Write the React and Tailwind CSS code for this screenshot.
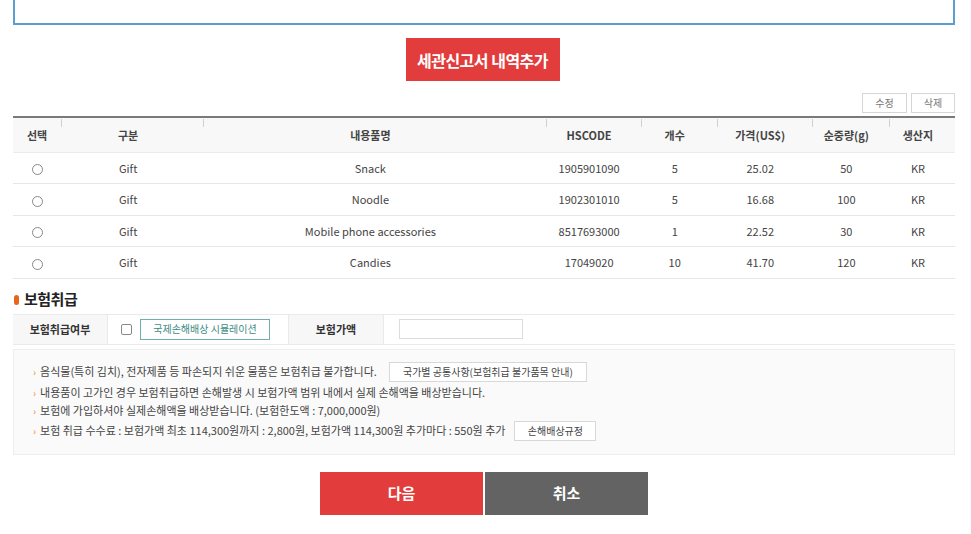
import React from "react";

const cols = [
  { label: "선택", w: 48 },
  { label: "구분", w: 142 },
  { label: "내용품명", w: 342 },
  { label: "HSCODE", w: 95 },
  { label: "개수", w: 76 },
  { label: "가격(US$)", w: 95 },
  { label: "순중량(g)", w: 77 },
  { label: "생산지", w: 66 },
];

const rows = [
  ["Gift", "Snack", "1905901090", "5", "25.02", "50", "KR"],
  ["Gift", "Noodle", "1902301010", "5", "16.68", "100", "KR"],
  ["Gift", "Mobile phone accessories", "8517693000", "1", "22.52", "30", "KR"],
  ["Gift", "Candies", "17049020", "10", "41.70", "120", "KR"],
];

function Arrow() {
  return <span className="text-[#f08a3c] mr-[4px] text-[10px]">›</span>;
}

export default function App() {
  return (
    <div
      className="w-[971px] h-[534px] bg-white overflow-hidden text-[#333]"
      style={{ fontFamily: '"Noto Sans CJK KR", "Noto Sans", sans-serif' }}
    >
      <div className="ml-[13px] w-[942px]">
        {/* top box */}
        <div className="h-[25px] border-x-2 border-b-2 border-[#5b9fcf]" />

        {/* add button */}
        <div className="flex justify-center mt-[13px]">
          <button className="w-[154px] h-[43px] bg-[#e23c3c] text-white text-[16px] font-bold tracking-[-0.5px] ml-[-3px]">
            세관신고서 내역추가
          </button>
        </div>

        {/* edit/delete */}
        <div className="flex justify-end gap-[4px] mt-[12px]">
          <button className="w-[45px] h-[20px] border border-[#d6d6d6] text-[10px] text-[#777] leading-none">수정</button>
          <button className="w-[44px] h-[20px] border border-[#d6d6d6] text-[10px] text-[#777] leading-none">삭제</button>
        </div>

        {/* table */}
        <table className="mt-[3px] w-[942px] border-t-2 border-[#7a7a7a] border-collapse table-fixed">
          <colgroup>
            {cols.map((c, i) => (
              <col key={i} style={{ width: c.w }} />
            ))}
          </colgroup>
          <thead>
            <tr className="h-[35px] bg-[#f8f8f8] border-b border-[#ececec]">
              {cols.map((c, i) => (
                <th key={i} className="relative text-[11px] font-semibold text-[#444] p-0 text-center">
                  {i > 0 && <span className="absolute left-0 top-[1px] w-px h-[8px] bg-[#d0d0d0]" />}
                  <span className={i === 0 ? "" : "ml-[-8px]"}>{c.label}</span>
                </th>
              ))}
            </tr>
          </thead>
          <tbody>
            {rows.map((r, ri) => (
              <tr key={ri} className="h-[31.5px] border-b border-[#e6e6e6] text-[11px] text-[#444]">
                <td className="text-center p-0">
                  <span className="inline-block w-[11px] h-[11px] rounded-full border border-[#888] align-middle" />
                </td>
                {r.map((v, i) => (
                  <td key={i} className="text-center p-0">
                    <span className="ml-[-8px]">{v}</span>
                  </td>
                ))}
              </tr>
            ))}
          </tbody>
        </table>

        {/* insurance */}
        <div className="mt-[11px] flex items-center h-[20px]">
          <span className="w-[5px] h-[10px] rounded-full bg-[#e8651c] mr-[5px] ml-[1px]" />
          <span className="text-[15px] font-bold text-[#222] tracking-[-0.5px]">보험취급</span>
        </div>

        <div className="mt-[4px] flex h-[31px] border-t border-[#d8d8d8] border-b border-[#eaeaea] text-[11px]">
          <div className="w-[95px] bg-[#f7f7f7] flex items-center justify-center font-bold text-[#333] border-r border-[#eaeaea]">
            보험취급여부
          </div>
          <div className="w-[180px] flex items-center pl-[13px]">
            <span className="w-[11px] h-[11px] border border-[#888] rounded-[2px] mr-[8px]" />
            <button className="w-[130px] h-[21px] border border-[#6fb1aa] text-[10px] text-[#3c8c84] leading-none">
              국제손해배상 시뮬레이션
            </button>
          </div>
          <div className="w-[96px] bg-[#f7f7f7] flex items-center justify-center font-bold text-[#333] border-x border-[#eaeaea]">
            보험가액
          </div>
          <div className="flex-1 flex items-center pl-[15px]">
            <div className="w-[124px] h-[20px] border border-[#dcdcdc] bg-white" />
          </div>
        </div>

        {/* notice */}
        <div className="mt-[4px] bg-[#fafafa] border border-[#eeeeee] pl-[19px] pt-[11px] pb-[12px] text-[11px] text-[#444]">
          <div className="h-[22px] flex items-center">
            <Arrow />
            <span>음식물(특히 김치), 전자제품 등 파손되지 쉬운 물품은 보험취급 불가합니다.</span>
            <button className="ml-[12px] w-[198px] h-[20px] border border-[#d8d8d8] bg-white text-[10px] text-[#444] leading-none">
              국가별 공통사항(보험취급 불가품목 안내)
            </button>
          </div>
          <div className="h-[19px] flex items-center">
            <Arrow />
            <span>내용품이 고가인 경우 보험취급하면 손해발생 시 보험가액 범위 내에서 실제 손해액을 배상받습니다.</span>
          </div>
          <div className="h-[18px] flex items-center">
            <Arrow />
            <span>보험에 가입하셔야 실제손해액을 배상받습니다. (보험한도액 : 7,000,000원)</span>
          </div>
          <div className="h-[22px] flex items-center">
            <Arrow />
            <span>보험 취급 수수료 : 보험가액 최초 114,300원까지 : 2,800원, 보험가액 114,300원 추가마다 : 550원 추가</span>
            <button className="ml-[9px] w-[82px] h-[20px] border border-[#d8d8d8] bg-white text-[10px] text-[#444] leading-none">
              손해배상규정
            </button>
          </div>
        </div>

        {/* bottom buttons */}
        <div className="mt-[17px] flex justify-center gap-[2px]">
          <button className="w-[163px] h-[43px] bg-[#e23c3c] text-white text-[15px] font-bold">다음</button>
          <button className="w-[163px] h-[43px] bg-[#636363] text-white text-[15px] font-bold">취소</button>
        </div>
      </div>
    </div>
  );
}
